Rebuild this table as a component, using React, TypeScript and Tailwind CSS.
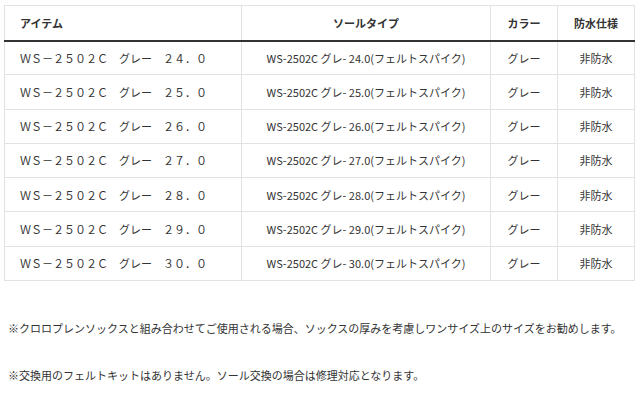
import React from "react";

const rows = ["２４．０", "２５．０", "２６．０", "２７．０", "２８．０", "２９．０", "３０．０"];
const half = ["24.0", "25.0", "26.0", "27.0", "28.0", "29.0", "30.0"];

export default function App() {
  return (
    <div
      className="w-[640px] h-[402px] bg-white text-[#333] text-[11px] overflow-hidden"
      style={{ fontFamily: '"Noto Sans CJK JP", "Noto Sans", sans-serif' }}
    >
      <div className="pt-[5px] pl-[4px]">
        <table className="table-fixed border-collapse w-[630px]">
          <thead>
            <tr className="h-[35px]">
              <th className="w-[237px] border border-[#e2e2e2] border-b-2 border-b-[#333] text-left pl-[15px] font-bold">
                アイテム
              </th>
              <th className="w-[249px] border border-[#e2e2e2] border-b-2 border-b-[#333] font-bold">
                ソールタイプ
              </th>
              <th className="w-[67px] border border-[#e2e2e2] border-b-2 border-b-[#333] font-bold">
                カラー
              </th>
              <th className="w-[77px] border border-[#e2e2e2] border-b-2 border-b-[#333] font-bold">
                防水仕様
              </th>
            </tr>
          </thead>
          <tbody>
            {rows.map((r, i) => (
              <tr key={r} className="h-[34.3px]">
                <td className="border border-[#e2e2e2] pl-[15px] whitespace-nowrap">
                  ＷＳ－２５０２Ｃ　グレー　{r}
                </td>
                <td className="border border-[#e2e2e2] text-center whitespace-nowrap">
                  WS-2502C グレ- {half[i]}(フェルトスパイク)
                </td>
                <td className="border border-[#e2e2e2] text-center">グレー</td>
                <td className="border border-[#e2e2e2] text-center">非防水</td>
              </tr>
            ))}
          </tbody>
        </table>
      </div>
      <p className="mt-[39px] ml-[8px] leading-[16px]">
        ※クロロプレンソックスと組み合わせてご使用される場合、ソックスの厚みを考慮しワンサイズ上のサイズをお勧めします。
      </p>
      <p className="mt-[31px] ml-[8px] leading-[16px]">
        ※交換用のフェルトキットはありません。ソール交換の場合は修理対応となります。
      </p>
    </div>
  );
}
